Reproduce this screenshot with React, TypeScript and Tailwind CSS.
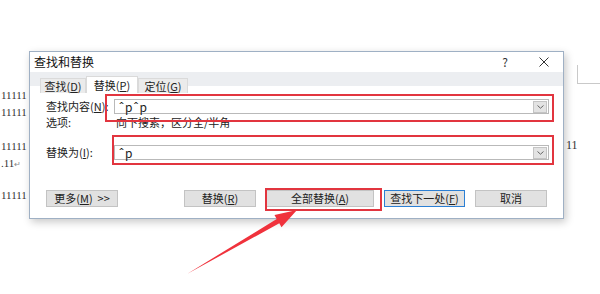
import React from "react";

const F = { fontFamily: '"Noto Sans CJK SC", "Noto Sans", sans-serif' };
const SERIF = { fontFamily: '"Liberation Serif", serif' };

function Combo({ value }: { value: string }) {
  return (
    <div className="flex-1 h-[15px] border border-[#b9b9b9] bg-white flex items-center justify-between pl-[4px] pr-[1px]">
      <span className="text-[12px] leading-none text-[#222] tracking-[1px]">{value}</span>
      <div className="w-[14px] h-[12px] bg-[#e3e3e3] border border-[#c4c4c4] flex items-center justify-center">
        <svg width="7" height="4" viewBox="0 0 7 4">
          <path d="M0.5 0.5 L3.5 3.2 L6.5 0.5" fill="none" stroke="#666" strokeWidth="1" />
        </svg>
      </div>
    </div>
  );
}

function Btn({ children, w, blue }: { children: React.ReactNode; w: number; blue?: boolean }) {
  return (
    <div
      style={{ width: w }}
      className={`h-[17px] flex items-center justify-center text-[11px] leading-none text-[#222] bg-[#e1e1e1] border ${
        blue ? "border-[#2b7fd4]" : "border-[#c3c3c3]"
      }`}
    >
      {children}
    </div>
  );
}

export default function App() {
  return (
    <div className="relative w-[600px] h-[294px] bg-white overflow-hidden" style={F}>
      {/* document text behind the dialog */}
      <div className="absolute left-[1px] top-[87px] text-[11px] leading-[17px] text-[#333]" style={SERIF}>
        <div>11111</div>
        <div>11111</div>
      </div>
      <div className="absolute left-[1px] top-[138px] text-[11px] leading-[17px] text-[#333]" style={SERIF}>
        <div>11111</div>
        <div>.11<span className="text-[8px] text-[#888]">↵</span></div>
      </div>
      <div className="absolute left-[1px] top-[187px] text-[11px] leading-[17px] text-[#333]" style={SERIF}>
        11111
      </div>
      <div className="absolute left-[566px] top-[137px] text-[12px] leading-[17px] text-[#333]" style={SERIF}>
        11
      </div>
      <div className="absolute left-[577px] top-[65px] w-[23px] h-[19px] border-l border-b border-[#c9c9c9]" />

      {/* dialog window */}
      <div className="absolute left-[29px] top-[51px] w-[535px] h-[168px] bg-white border border-[#9fb0c4] shadow-[2px_3px_8px_rgba(0,0,0,0.22)] flex flex-col">
        {/* title bar */}
        <div className="h-[20px] flex items-center pl-[4px] pr-[14px] text-[12px] text-[#111]">
          <span className="leading-none">查找和替换</span>
          <span className="ml-auto mr-[31px] text-[12px] leading-none text-[#333]">?</span>
          <svg width="10" height="10" viewBox="0 0 10 10">
            <path d="M0.5 0.5 L9.5 9.5 M9.5 0.5 L0.5 9.5" stroke="#333" strokeWidth="1" />
          </svg>
        </div>
        {/* tab strip */}
        <div className="h-[21px] flex items-end pl-[10px] bg-[linear-gradient(#eceef1_14px,#ffffff_14px)]">
          <div className="w-[46px] h-[15px] flex items-center justify-center text-[11px] leading-none text-[#222] bg-[#ebebeb] border border-[#dadada] border-b-0">
            查找(<u>D</u>)
          </div>
          <div className="w-[52px] h-[17px] flex items-center justify-center text-[11px] leading-none text-[#222] bg-white border border-[#dadada] border-b-0">
            替换(<u>P</u>)
          </div>
          <div className="w-[50px] h-[15px] flex items-center justify-center text-[11px] leading-none text-[#222] bg-[#ebebeb] border border-[#dadada] border-b-0">
            定位(<u>G</u>)
          </div>
        </div>
        {/* content */}
        <div className="flex flex-col pl-[16px] pr-[14px]">
          <div className="mt-[6px] flex items-center">
            <span className="w-[68px] whitespace-nowrap text-[11px] leading-none text-[#222]">
              查找内容(<u>N</u>):
            </span>
            <Combo value="ˆpˆp" />
          </div>
          <div className="mt-[1px] h-[14px] flex items-center">
            <span className="w-[70px] text-[11px] leading-none text-[#222]">选项:</span>
            <span className="text-[11px] leading-none text-[#222]">向下搜索，区分全/半角</span>
          </div>
          <div className="mt-[16px] flex items-center">
            <span className="w-[68px] text-[11px] leading-none text-[#222]">
              替换为(<u>I</u>):
            </span>
            <Combo value="ˆp" />
          </div>
          <div className="mt-[30px] flex items-center pr-[2px]">
            <Btn w={72}>
              更多(<u>M</u>)&nbsp;&nbsp;&gt;&gt;
            </Btn>
            <div className="ml-auto flex gap-[10px]">
              <Btn w={72}>
                替换(<u>R</u>)
              </Btn>
              <Btn w={108}>
                全部替换(<u>A</u>)
              </Btn>
              <Btn w={81} blue>
                查找下一处(<u>F</u>)
              </Btn>
              <Btn w={72}>取消</Btn>
            </div>
          </div>
        </div>

        {/* red annotation boxes */}
        <div className="absolute left-[75px] top-[42px] w-[449px] h-[28px] border-2 border-[#e2353f]" />
        <div className="absolute left-[82px] top-[83px] w-[442px] h-[30px] border-2 border-[#e2353f]" />
        <div className="absolute left-[235px] top-[136px] w-[117px] h-[23px] border-2 border-[#e2353f]" />
      </div>

      {/* red arrow */}
      <svg className="absolute left-0 top-0" width="600" height="294" viewBox="0 0 600 294">
        <polygon
          points="187,274 279.3,223.3 281.5,227.2 297,210 274.5,215 276.7,219"
          fill="#f0323c"
        />
      </svg>
    </div>
  );
}
